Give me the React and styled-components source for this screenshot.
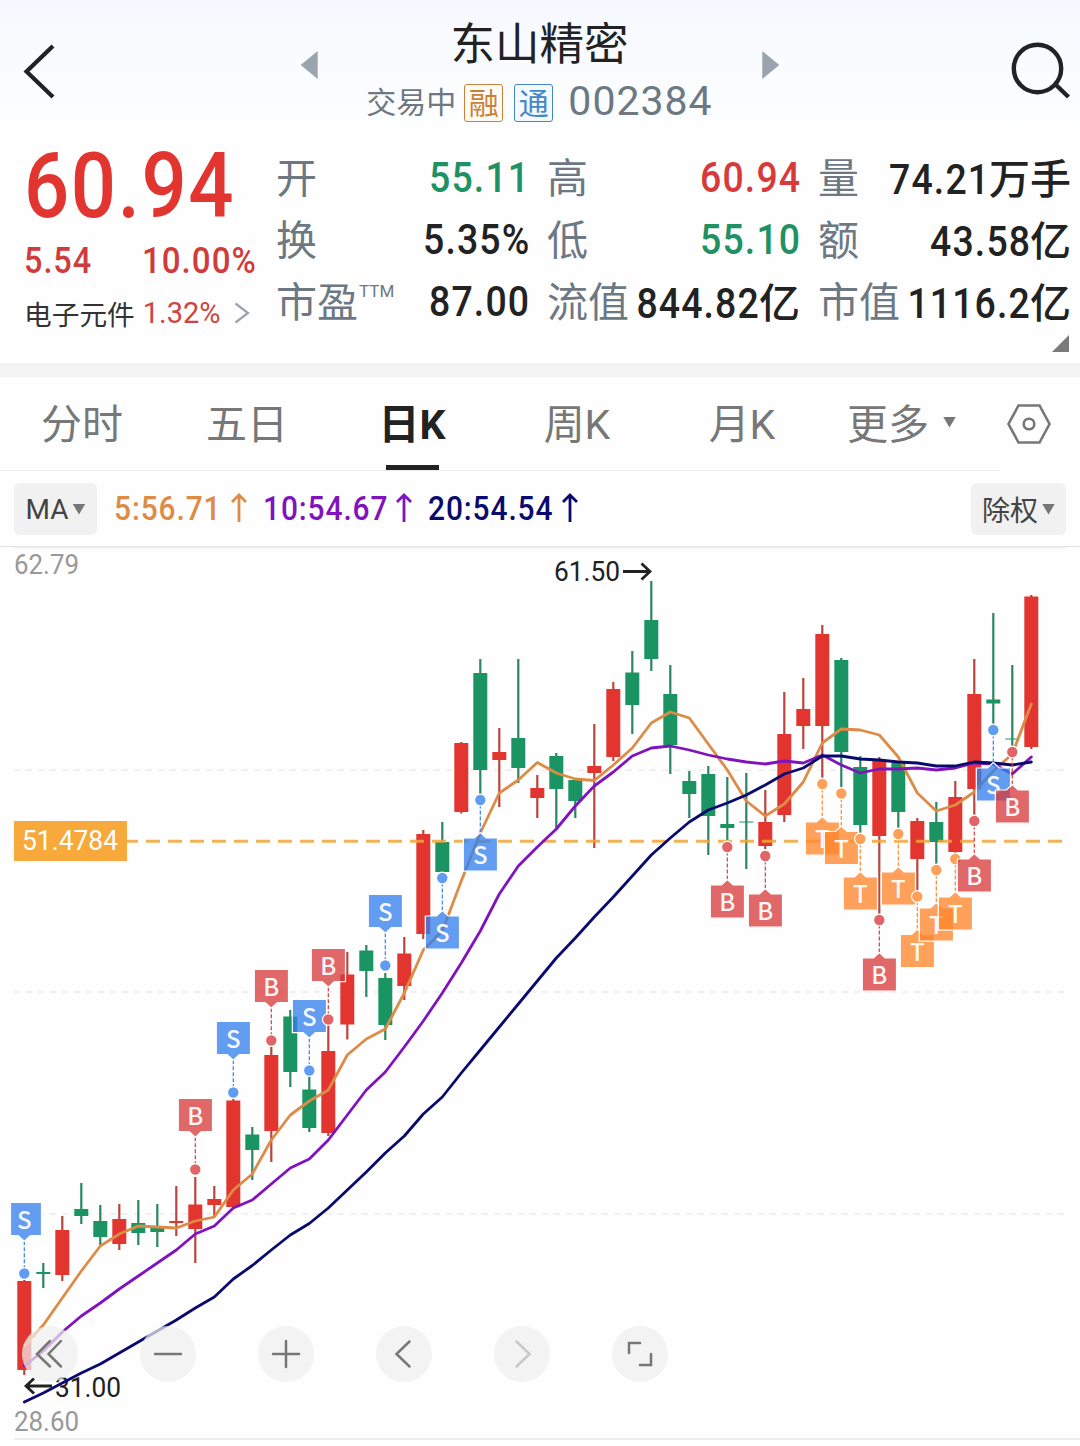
import { useState } from "react"
import styled, { createGlobalStyle } from "styled-components"

const RED = "#e3352f"
const GREEN = "#1b9463"
const ORANGE = "#dc8c47"
const PURPLE = "#8013bd"
const NAVY = "#0a0a6e"
const FLAG_COLORS = { B: "#d83a3c", S: "#3380ee", T: "#ff852a" }

const stats = [
  { label: "开", value: "55.11", color: "#1f9163" },
  { label: "高", value: "60.94", color: "#d8393a" },
  { label: "量", value: "74.21", unit: "万手" },
  { label: "换", value: "5.35%" },
  { label: "低", value: "55.10", color: "#1f9163" },
  { label: "额", value: "43.58", unit: "亿" },
  { label: "市盈", sup: "TTM", value: "87.00" },
  { label: "流值", value: "844.82", unit: "亿" },
  { label: "市值", value: "1116.2", unit: "亿" },
]

const tabs = ["分时", "五日", "日K", "周K", "月K", "更多"]

const averages = [
  { text: "5:56.71", color: ORANGE, width: 149 },
  { text: "10:54.67", color: PURPLE, width: 165 },
  { text: "20:54.54", color: NAVY, width: 166 },
]

// up day, high, body top, body bottom, low
const candles = [
  [1, 1280, 1281, 1370, 1375],
  [0, 1263, 1272, 1274, 1288],
  [1, 1216, 1230, 1275, 1281],
  [0, 1183, 1209, 1216, 1224],
  [0, 1205, 1221, 1237, 1245],
  [1, 1204, 1219, 1244, 1250],
  [0, 1200, 1223, 1233, 1245],
  [0, 1204, 1227, 1232, 1247],
  [1, 1186, 1221, 1223, 1236],
  [1, 1177, 1204.5, 1229, 1263],
  [1, 1186, 1199, 1205, 1217],
  [1, 1099, 1100.5, 1207, 1208],
  [0, 1127, 1134.5, 1150, 1180],
  [1, 1047, 1055, 1131, 1162],
  [0, 1010, 1016.5, 1072, 1087],
  [0, 1077, 1089.5, 1128, 1132],
  [1, 1025, 1051, 1133, 1136],
  [1, 952, 974.5, 1024.5, 1039.5],
  [0, 945, 950.5, 971, 997],
  [0, 973, 978, 1025, 1040],
  [1, 937, 953.5, 986, 1000],
  [1, 830, 834, 934, 939],
  [0, 822, 842, 872, 872],
  [1, 742, 743, 812, 813.5],
  [0, 659, 673, 770, 794],
  [1, 728, 752, 760, 807],
  [0, 659, 738, 768, 783],
  [1, 775, 788, 798, 818],
  [0, 753, 756, 789, 828],
  [0, 778, 780, 801, 818],
  [1, 724, 766, 773, 848],
  [1, 682, 689, 757, 761],
  [0, 651, 672.5, 705, 734],
  [0, 581, 620, 659, 671],
  [0, 665, 694, 745, 774],
  [0, 771, 781, 794, 818],
  [0, 766, 774, 816, 855],
  [0, 777, 824, 828, 841],
  [0, 773, 821.5, 822.5, 869],
  [1, 790, 822, 846, 849],
  [1, 692, 734, 815, 822],
  [1, 678, 709, 726, 749],
  [1, 625, 634, 726, 778],
  [0, 658, 660, 752, 787],
  [0, 756, 767, 825, 833],
  [1, 757, 761, 836, 914],
  [0, 762, 763, 812, 828],
  [1, 818, 821, 859, 890],
  [0, 802, 822, 842, 864],
  [1, 781, 797, 852, 854],
  [1, 659, 694, 789, 815],
  [0, 613, 699.5, 703.5, 724],
  [0, 665, 738.5, 739.5, 746],
  [1, 595, 596.5, 747, 749],
]

const ma5 = [
  1346, 1325, 1298, 1271, 1246, 1234, 1226, 1227, 1228, 1221, 1217, 1190, 1174,
  1140, 1115, 1101, 1090, 1055, 1039, 1029, 993, 950, 931, 881, 833, 793, 780,
  762.5, 773, 779, 780.5, 765, 748, 723, 712, 718, 744, 770, 801, 816, 804, 782,
  743, 729, 730, 735, 757, 793, 811, 805, 792, 771, 754, 704,
]

const ma10 = [
  1366, 1351, 1332, 1316, 1303, 1289, 1276, 1263, 1250, 1234, 1226, 1208, 1200,
  1184, 1168, 1159, 1140, 1115, 1090, 1072, 1047, 1021, 993, 963, 931, 894, 866,
  847, 829, 806, 786, 772, 756, 748, 746, 750, 755, 759, 762, 764, 761, 763, 755,
  765, 773, 769, 769, 768, 770, 768, 763, 764, 774, 757,
]

const ma20 = [
  1402, 1393, 1383, 1373, 1364, 1353, 1342, 1331, 1320, 1308, 1297, 1279, 1265.5,
  1250, 1235, 1223.5, 1208, 1190, 1172, 1153, 1136, 1114, 1097, 1073, 1050, 1027,
  1004, 981, 958, 938, 917, 897, 876, 855, 838, 822, 810, 803, 795, 785, 774,
  768, 756, 756, 759, 760, 762, 763, 766, 766, 762, 763, 765, 762,
]

const flags = [
  { day: 0, type: "S", dot: 1273.5, up: true },
  { day: 9, type: "B", dot: 1169.5, up: true },
  { day: 11, type: "S", dot: 1092.5, up: true },
  { day: 13, type: "B", dot: 1040.5, up: true },
  { day: 15, type: "S", dot: 1070.5, up: true },
  { day: 16, type: "B", dot: 1019.5, up: true },
  { day: 19, type: "S", dot: 965.5, up: true },
  { day: 22, type: "S", dot: 878 },
  { day: 24, type: "S", dot: 800 },
  { day: 37, type: "B", dot: 847 },
  { day: 39, type: "B", dot: 856 },
  { day: 42, type: "T", dot: 784 },
  { day: 43, type: "T", dot: 793.5 },
  { day: 44, type: "T", dot: 839 },
  { day: 45, type: "B", dot: 920 },
  { day: 46, type: "T", dot: 834 },
  { day: 47, type: "T", dot: 896.5 },
  { day: 48, type: "T", dot: 870 },
  { day: 49, type: "T", dot: 859 },
  { day: 50, type: "B", dot: 821 },
  { day: 51, type: "S", dot: 730 },
  { day: 52, type: "B", dot: 752 },
]

const dayX = (day) => 24.3 + day * 19

const toPoints = (values) => values.map((y, i) => `${dayX(i)},${y}`).join(" ")

const Flag = ({ day, type, dot, up }) => {
  const x = dayX(day)
  const color = FLAG_COLORS[type]
  const top = up ? dot - 71 : dot + 38
  const left = Math.max(x - 17, 10.5)
  const right = x + 17.2
  const bottom = top + 33.2
  const tip = up ? bottom + 5.5 : top - 5.5
  const shape = up
    ? `M${left} ${top}H${right}V${bottom}H${x + 6}L${x} ${tip}L${x - 6} ${bottom}H${left}Z`
    : `M${left} ${top}H${x - 6}L${x} ${tip}L${x + 6} ${top}H${right}V${bottom}H${left}Z`

  return (
    <g>
      <line
        x1={x}
        x2={x}
        y1={tip}
        y2={dot}
        stroke={color}
        strokeWidth="1.2"
        strokeDasharray="4 2"
      />
      <circle cx={x} cy={dot} r="5.8" fill="#fff" />
      <circle
        cx={x}
        cy={dot}
        r="5.8"
        fill={color}
        fillOpacity=".78"
        stroke="#fff"
        strokeWidth="1.2"
      />
      <path
        d={shape}
        fill={color}
        fillOpacity=".77"
        stroke="#fff"
        strokeWidth="1.2"
        strokeLinejoin="round"
      />
      <FlagText x={x} y={top + 26}>
        {type}
      </FlagText>
    </g>
  )
}

const Chart = () => (
  <ChartSvg viewBox="0 546 1080 900">
    <path d="M0 546.5H1080" stroke="#e0e0e0" />
    <path d="M14 547.5H1066M14 1439H1080" stroke="#eeeeee" strokeWidth="2" />
    <path
      d="M14 770H1068M14 992H1068M14 1214H1068"
      stroke="#ececec"
      strokeWidth="1.5"
      strokeDasharray="6 6"
    />
    {candles.map(([up, high, open, close, low], i) => (
      <g key={i} fill={up ? RED : GREEN}>
        <rect
          x={dayX(i) - 1.1}
          y={high}
          width="2.2"
          height={low - high}
          fill={up ? "#b8453e" : "#2a8762"}
        />
        <rect x={dayX(i) - 7} y={open} width="14" height={close - open} />
      </g>
    ))}
    <path
      d="M124 841.2H1062"
      stroke="#f2a53a"
      strokeOpacity=".85"
      strokeWidth="3"
      strokeDasharray="14 8"
    />
    <AxisText x="14" y="574" textLength="65">
      62.79
    </AxisText>
    <AxisText x="14" y="1430.5" textLength="65">
      28.60
    </AxisText>
    <PriceText x="554" y="580.7" textLength="66">
      61.50
    </PriceText>
    <PriceText x="55" y="1396.7" textLength="66">
      31.00
    </PriceText>
    <g fill="none" stroke="#222" strokeWidth="2.8">
      <path d="M623 571.5H650M641.5 563.5L650 571.5L641.5 579.5" />
      <path d="M52 1386H26M34 1378.5L26 1386L34 1393.5" />
    </g>
    <g fill="none" strokeWidth="2.8" strokeLinejoin="round" strokeLinecap="round">
      <polyline points={toPoints(ma5)} stroke={ORANGE} />
      <polyline points={toPoints(ma10)} stroke={PURPLE} />
      <polyline points={toPoints(ma20)} stroke={NAVY} />
    </g>
    <rect x="14" y="821" width="113" height="40" fill="#f8a93c" />
    <CostText x="22" y="850" textLength="96">
      51.4784
    </CostText>
    {flags.map((flag) => (
      <Flag key={flag.day} {...flag} />
    ))}
  </ChartSvg>
)

const controls = [
  { name: "first", d: "M28 15L15 28L28 40.5M39 15L26.5 28L39 40.5" },
  { name: "zoom-out", d: "M15 28H41" },
  { name: "zoom-in", d: "M15 28H41M28 15V41" },
  { name: "prev", d: "M33.5 15.5L20.5 28L33.5 40.5" },
  { name: "next", d: "M22.5 15.5L35.5 28L22.5 40.5", disabled: true },
  { name: "full", d: "M17 27V17H28M39 28V39H28" },
]

export default function App() {
  const [tab, setTab] = useState("日K")

  return (
    <Page>
      <GlobalStyle />
      <Header>
        <BackIcon viewBox="0 0 34 56">
          <path d="M31 3L4.5 28.5L31 54" />
        </BackIcon>
        <Arrow />
        <TitleBlock>
          <Title>东山精密</Title>
          <SubTitle>
            <Status>交易中</Status>
            <Badge $color="#c8813c" $bg="#fffaf2">
              融
            </Badge>
            <Badge $color="#4686c6" $bg="#f3faff">
              通
            </Badge>
            <Code>002384</Code>
          </SubTitle>
        </TitleBlock>
        <Arrow $right />
        <SearchIcon viewBox="0 0 60 60">
          <circle cx="27.5" cy="28.5" r="23.7" />
          <path d="M44.5 43.5L58.5 57" />
        </SearchIcon>
      </Header>

      <Quote>
        <PriceBlock>
          <Price>60.94</Price>
          <Change>
            <Num $origin="left" $scale={0.9}>
              5.54
            </Num>
            <Num $origin="right" $scale={0.92}>
              10.00%
            </Num>
          </Change>
          <Sector>
            电子元件
            <SectorRate>1.32%</SectorRate>
            <SectorIcon viewBox="0 0 16 22">
              <path d="M1.5 1.5L14 11L1.5 20.5" />
            </SectorIcon>
          </Sector>
        </PriceBlock>
        <StatGrid>
          {stats.map(({ label, sup, value, unit, color }) => (
            <Stat key={label}>
              <StatLabel>
                {label}
                {sup && <Sup>{sup}</Sup>}
              </StatLabel>
              <StatValue $color={color} $unit={unit}>
                <Num $origin="right" $scale={0.87}>
                  {value}
                </Num>
                {unit && <Unit>{unit}</Unit>}
              </StatValue>
            </Stat>
          ))}
        </StatGrid>
        <Corner viewBox="0 0 17 17">
          <path d="M17 0V17H0Z" />
        </Corner>
      </Quote>

      <Tabs>
        <TabList>
          {tabs.map((name) => (
            <Tab key={name} $active={tab === name} onClick={() => setTab(name)}>
              {name}
              {name === "更多" && <Caret $space={14} $end={11} $drop={3} />}
            </Tab>
          ))}
        </TabList>
        <SettingIcon viewBox="0 0 44 40">
          <path d="M11.5 1.5H32.5L42.5 20L32.5 38.5H11.5L1.5 20Z" />
          <circle cx="22" cy="20" r="5.3" />
        </SettingIcon>
      </Tabs>

      <Toolbar>
        <SmallButton $width={83}>
          MA
          <Caret $space={4} />
        </SmallButton>
        <AverageList>
          {averages.map(({ text, color, width }) => (
            <Average key={text} $color={color} $width={width}>
              <Num $origin="left" $scale={0.88}>
                {text}
              </Num>
              <UpIcon viewBox="0 0 16 29">
                <path d="M8 29V2M1 9L8 2L15 9" />
              </UpIcon>
            </Average>
          ))}
        </AverageList>
        <SmallButton $width={95}>
          除权
          <Caret $space={4} />
        </SmallButton>
      </Toolbar>

      <ChartArea>
        <Chart />
        <Controls>
          {controls.map(({ name, d, disabled }) => (
            <ControlButton key={name} aria-label={name} disabled={disabled}>
              <svg viewBox="0 0 56 56">
                <path d={d} />
              </svg>
            </ControlButton>
          ))}
        </Controls>
      </ChartArea>
    </Page>
  )
}

const GlobalStyle = createGlobalStyle`
  body {
    margin: 0;
    background: #fff;
  }

  * {
    box-sizing: border-box;
  }

  button {
    border: 0;
    padding: 0;
    background: none;
    font-family: inherit;
  }
`

const Page = styled.main`
  width: 1080px;
  height: 1446px;
  overflow: hidden;
  display: flex;
  flex-direction: column;
  background: #fefefe;
  color: #222;
  font-family: Roboto, "Noto Sans CJK SC", sans-serif;
`

const Num = styled.span`
  display: inline-block;
  margin-right: -0.03em;
  letter-spacing: 0.03em;
  transform: scaleX(${(props) => props.$scale});
  transform-origin: ${(props) => props.$origin} center;
`

const Header = styled.header`
  height: 140px;
  padding: 0 10px 0 22px;
  display: flex;
  justify-content: space-between;
  background: linear-gradient(#f5f9ff, #fefefe);
`

const BackIcon = styled.svg`
  width: 34px;
  height: 56px;
  margin-top: 43px;
  fill: none;
  stroke: #222;
  stroke-width: 4.2;
`

const Arrow = styled.i`
  width: 17px;
  height: 28px;
  margin-top: 51px;
  margin-left: ${(props) => (props.$right ? 0 : "196px")};
  margin-right: ${(props) => (props.$right ? "182px" : 0)};
  background: #9aa4ae;
  clip-path: ${(props) =>
    props.$right
      ? "polygon(0 0, 100% 50%, 0 100%)"
      : "polygon(100% 0, 0 50%, 100% 100%)"};
`

const TitleBlock = styled.div`
  display: flex;
  flex-direction: column;
  align-items: center;
  margin-right: 1px;
`

const Title = styled.h1`
  margin: 12px 0 0;
  font-size: 44.5px;
  font-weight: 400;
  line-height: 66px;
`

const SubTitle = styled.div`
  height: 48px;
  display: flex;
  align-items: center;
  color: #6d7883;
`

const Status = styled.span`
  margin: -5px 8px 0 0;
  font-size: 30px;
`

const Badge = styled.span`
  width: 39px;
  height: 38px;
  margin: 2px 11px 0 0;
  border: 1.5px solid ${(props) => props.$color};
  border-radius: 3px;
  background: ${(props) => props.$bg};
  color: ${(props) => props.$color};
  font-size: 30px;
  line-height: 37px;
  display: flex;
  justify-content: center;
`

const Code = styled.span`
  margin: -3px 0 0 4px;
  font-size: 41px;
  letter-spacing: 1px;
`

const SearchIcon = styled.svg`
  width: 60px;
  height: 60px;
  margin-top: 40px;
  fill: none;
  stroke: #222;
  stroke-width: 4.4;
`

const Quote = styled.section`
  height: 237px;
  padding: 0 10px 0 24px;
  display: flex;
  position: relative;
  border-bottom: 14px solid #f3f3f3;
`

const PriceBlock = styled.div`
  width: 232px;
  margin-right: 20px;
`

const Price = styled.div`
  height: 92px;
  font-size: 91px;
  font-weight: 500;
  letter-spacing: 0.02em;
  line-height: 92px;
  color: ${RED};
  transform: scaleX(0.875);
  transform-origin: left;
`

const Change = styled.div`
  display: flex;
  justify-content: space-between;
  font-size: 36px;
  font-weight: 500;
  line-height: 58px;
  color: #d03c3b;
`

const Sector = styled.div`
  display: flex;
  align-items: center;
  height: 46px;
  font-size: 27.7px;
  color: #333;
`

const SectorRate = styled.span`
  margin-left: 8px;
  font-size: 29px;
  color: #cf4440;
`

const SectorIcon = styled.svg`
  width: 16px;
  height: 22px;
  margin-left: 13px;
  fill: none;
  stroke: #9aa4ae;
  stroke-width: 2.2;
`

const StatGrid = styled.div`
  width: 795px;
  height: 186px;
  margin-top: 7px;
  display: grid;
  grid-template-columns: 253px 253px 253px;
  grid-template-rows: repeat(3, 62px);
  column-gap: 18px;
`

const Stat = styled.div`
  display: flex;
  justify-content: space-between;
  align-items: center;
  white-space: nowrap;
`

const StatLabel = styled.span`
  display: flex;
  margin-top: 2px;
  font-size: 41px;
  line-height: 60px;
  color: #6d7883;
`

const Sup = styled.span`
  margin-left: 1px;
  font-size: 17px;
  line-height: 36px;
`

const StatValue = styled.span`
  display: flex;
  justify-content: flex-end;
  align-items: baseline;
  width: 0;
  margin-top: ${(props) => (props.$unit ? "3px" : "-2px")};
  font-size: 43px;
  font-weight: 500;
  line-height: 60px;
  color: ${(props) => props.$color || "#222"};
`

const Unit = styled.span`
  font-size: 41px;
  font-weight: 500;
`

const Corner = styled.svg`
  position: absolute;
  right: 11px;
  bottom: 11px;
  width: 17px;
  height: 17px;
  fill: #7a7a7a;
`

const Tabs = styled.nav`
  height: 94px;
  display: flex;
  align-items: center;
`

const TabList = styled.div`
  width: 1000px;
  height: 94px;
  display: flex;
  border-bottom: 1px solid #ececec;
`

const Tab = styled.button`
  position: relative;
  width: 165px;
  height: 93px;
  padding: 0 1px 6px 0;
  display: flex;
  justify-content: center;
  align-items: center;
  font-size: 41px;
  font-weight: ${(props) => (props.$active ? 700 : 400)};
  color: ${(props) => (props.$active ? "#222" : "#777")};

  &::after {
    content: "";
    display: ${(props) => (props.$active ? "block" : "none")};
    position: absolute;
    bottom: 0;
    left: 56px;
    width: 53px;
    height: 5px;
    background: #222;
  }
`

const Caret = styled.i`
  width: 13px;
  height: 11px;
  margin-top: ${(props) => props.$drop || 0}px;
  margin-left: ${(props) => props.$space}px;
  margin-right: ${(props) => props.$end || 0}px;
  background: #777;
  clip-path: polygon(0 0, 100% 0, 50% 100%);
`

const SettingIcon = styled.svg`
  width: 44px;
  height: 40px;
  margin-left: 7px;
  fill: none;
  stroke: #777;
  stroke-width: 2.6;
`

const Toolbar = styled.div`
  height: 75px;
  padding: 0 14px;
  display: flex;
  align-items: center;
`

const SmallButton = styled.button`
  width: ${(props) => props.$width}px;
  height: 52px;
  margin-top: 1px;
  display: flex;
  justify-content: center;
  align-items: center;
  border-radius: 6px;
  background: #f1f1f1;
  color: #444;
  font-size: 28px;
`

const AverageList = styled.div`
  flex: 1;
  display: flex;
  padding-left: 17px;
  margin-top: -2px;
`

const Average = styled.span`
  width: ${(props) => props.$width}px;
  padding-right: 16px;
  display: flex;
  justify-content: space-between;
  align-items: center;
  color: ${(props) => props.$color};
  font-size: 34px;
  font-weight: 500;
`

const UpIcon = styled.svg`
  flex: none;
  width: 16px;
  height: 29px;
  margin-left: -14px;
  fill: none;
  stroke: currentColor;
  stroke-width: 2.8;
`

const ChartArea = styled.section`
  position: relative;
  height: 900px;
`

const ChartSvg = styled.svg`
  display: block;
  width: 1080px;
  height: 900px;
`

const AxisText = styled.text.attrs({ lengthAdjust: "spacingAndGlyphs" })`
  font-size: 28px;
  fill: #999;
`

const PriceText = styled(AxisText)`
  fill: #222;
`

const CostText = styled(AxisText)`
  fill: #fff;
`

const FlagText = styled.text`
  font-family: "Noto Sans CJK SC", sans-serif;
  font-size: 24px;
  font-weight: 500;
  text-anchor: middle;
  fill: #fff;
  fill-opacity: 0.95;
`

const Controls = styled.div`
  position: absolute;
  left: 22px;
  top: 780px;
  display: flex;
  gap: 62px;
`

const ControlButton = styled.button`
  width: 56px;
  height: 56px;
  border-radius: 50%;
  background: rgba(238, 238, 238, 0.72);

  svg {
    display: block;
    fill: none;
    stroke: ${(props) => (props.disabled ? "#c8c8c8" : "#777")};
    stroke-width: 2.5;
    stroke-linecap: round;
  }
`
